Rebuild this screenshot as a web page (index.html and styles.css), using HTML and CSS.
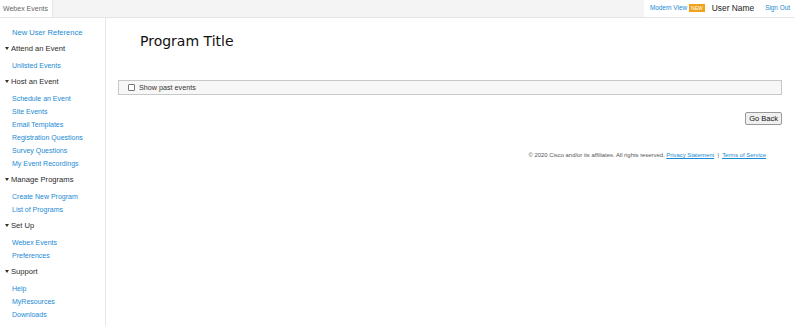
FILE: index.html
```html
<!DOCTYPE html>
<html lang="en">
<head>
  <meta charset="UTF-8" />
  <title>Webex Events - Program</title>
  <link rel="stylesheet" href="styles.css">
</head>
<body>
  <header class="topbar">
    <div class="tab">Webex Events</div>
    <div class="filler"></div>
    <div class="user-area">
      <a href="#" class="modern">Modern View</a>
      <span class="badge">NEW</span>
      <span class="user">User Name</span>
      <a href="#" class="signout">Sign Out</a>
    </div>
  </header>

  <div class="page">
    <aside class="sidebar">
      <a href="#" class="ref">New User Reference</a>

      <div class="group">
        <div class="group-title"><span class="caret"></span>Attend an Event</div>
        <a href="#">Unlisted Events</a>
      </div>

      <div class="group">
        <div class="group-title"><span class="caret"></span>Host an Event</div>
        <a href="#">Schedule an Event</a>
        <a href="#">Site Events</a>
        <a href="#">Email Templates</a>
        <a href="#">Registration Questions</a>
        <a href="#">Survey Questions</a>
        <a href="#">My Event Recordings</a>
      </div>

      <div class="group">
        <div class="group-title"><span class="caret"></span>Manage Programs</div>
        <a href="#">Create New Program</a>
        <a href="#">List of Programs</a>
      </div>

      <div class="group">
        <div class="group-title"><span class="caret"></span>Set Up</div>
        <a href="#">Webex Events</a>
        <a href="#">Preferences</a>
      </div>

      <div class="group">
        <div class="group-title"><span class="caret"></span>Support</div>
        <a href="#">Help</a>
        <a href="#">MyResources</a>
        <a href="#">Downloads</a>
      </div>
    </aside>

    <main class="content">
      <h1>Program Title</h1>
      <div class="filter-bar">
        <label><input type="checkbox" /> Show past events</label>
      </div>
      <div class="actions">
        <button>Go Back</button>
      </div>
      <div class="footer">
        &copy; 2020 Cisco and/or its affiliates. All rights reserved.
        <a href="#">Privacy Statement</a> &nbsp;|&nbsp; <a href="#">Terms of Service</a>
      </div>
    </main>
  </div>
</body>
</html>
```

FILE: styles.css
```css
* {
  box-sizing: border-box;
  margin: 0;
  padding: 0;
}
body {
  font-family: "Liberation Sans", Arial, sans-serif;
  background: #fff;
  color: #333;
}
a {
  color: #1a8ad4;
  text-decoration: none;
}
.topbar {
  display: flex;
  height: 18px;
  border-bottom: 1px solid #e4e4e4;
}
.tab {
  width: 53px;
  font-size: 7px;
  white-space: nowrap;
  color: #666;
  padding: 5px 0 0 3px;
  border-right: 1px solid #e4e4e4;
}
.filler {
  flex: 1;
  background: #f4f4f4;
}
.user-area {
  display: flex;
  align-items: center;
  padding: 0 4px 2px 6px;
  font-size: 6.4px;
  white-space: nowrap;
}
.badge {
  background: #f0a21a;
  color: #fff;
  font-size: 5px;
  padding: 1px 2px;
  margin: 0 7px 0 2px;
}
.user {
  font-size: 8.4px;
  color: #222;
  margin-right: 11px;
}
.page {
  display: flex;
}
.sidebar {
  width: 106px;
  border-right: 1px solid #e6e6e6;
  padding: 10px 0 5px 0;
  height: 308px;
}
.sidebar a {
  display: block;
  font-size: 7px;
  line-height: 13px;
  padding-left: 12px;
}
.sidebar .ref {
  font-size: 7.6px;
  line-height: 10px;
  margin-bottom: 4px;
}
.group {
  margin-bottom: 3px;
}
.group-title {
  font-size: 7.6px;
  color: #2a2a2a;
  line-height: 14px;
  padding-left: 5px;
  margin-bottom: 3px;
}
.caret {
  display: inline-block;
  width: 0;
  height: 0;
  border-left: 2.5px solid transparent;
  border-right: 2.5px solid transparent;
  border-top: 3px solid #333;
  margin-right: 2px;
  vertical-align: 1px;
}
.content {
  flex: 1;
  padding: 12px 12px 0 12px;
}
.content h1 {
  font-family: "DejaVu Sans", Verdana, sans-serif;
  font-weight: normal;
  font-size: 14px;
  color: #111;
  margin-left: 22px;
  line-height: 22px;
  margin-bottom: 28px;
}
.filter-bar {
  background: #f7f7f7;
  border: 1px solid #c8c8c8;
  height: 15px;
  padding-left: 9px;
  font-size: 7.2px;
  color: #333;
  display: flex;
  align-items: center;
}
.filter-bar label {
  display: flex;
  align-items: center;
}
.filter-bar input {
  appearance: none;
  -webkit-appearance: none;
  width: 7px;
  height: 7px;
  border: 1px solid #777;
  border-radius: 1px;
  background: #fff;
  margin-right: 4px;
}
.actions {
  display: flex;
  justify-content: flex-end;
  margin-top: 17px;
}
.actions button {
  font-family: "Liberation Sans", Arial, sans-serif;
  font-size: 7.5px;
  padding: 1px 3px;
  background: #f0f0f0;
  border: 1px solid #999;
  border-radius: 2px;
  color: #111;
}
.footer {
  text-align: right;
  padding-right: 16px;
  margin-top: 27px;
  font-size: 5.9px;
  color: #555;
}
.footer a {
  text-decoration: underline;
}
```
